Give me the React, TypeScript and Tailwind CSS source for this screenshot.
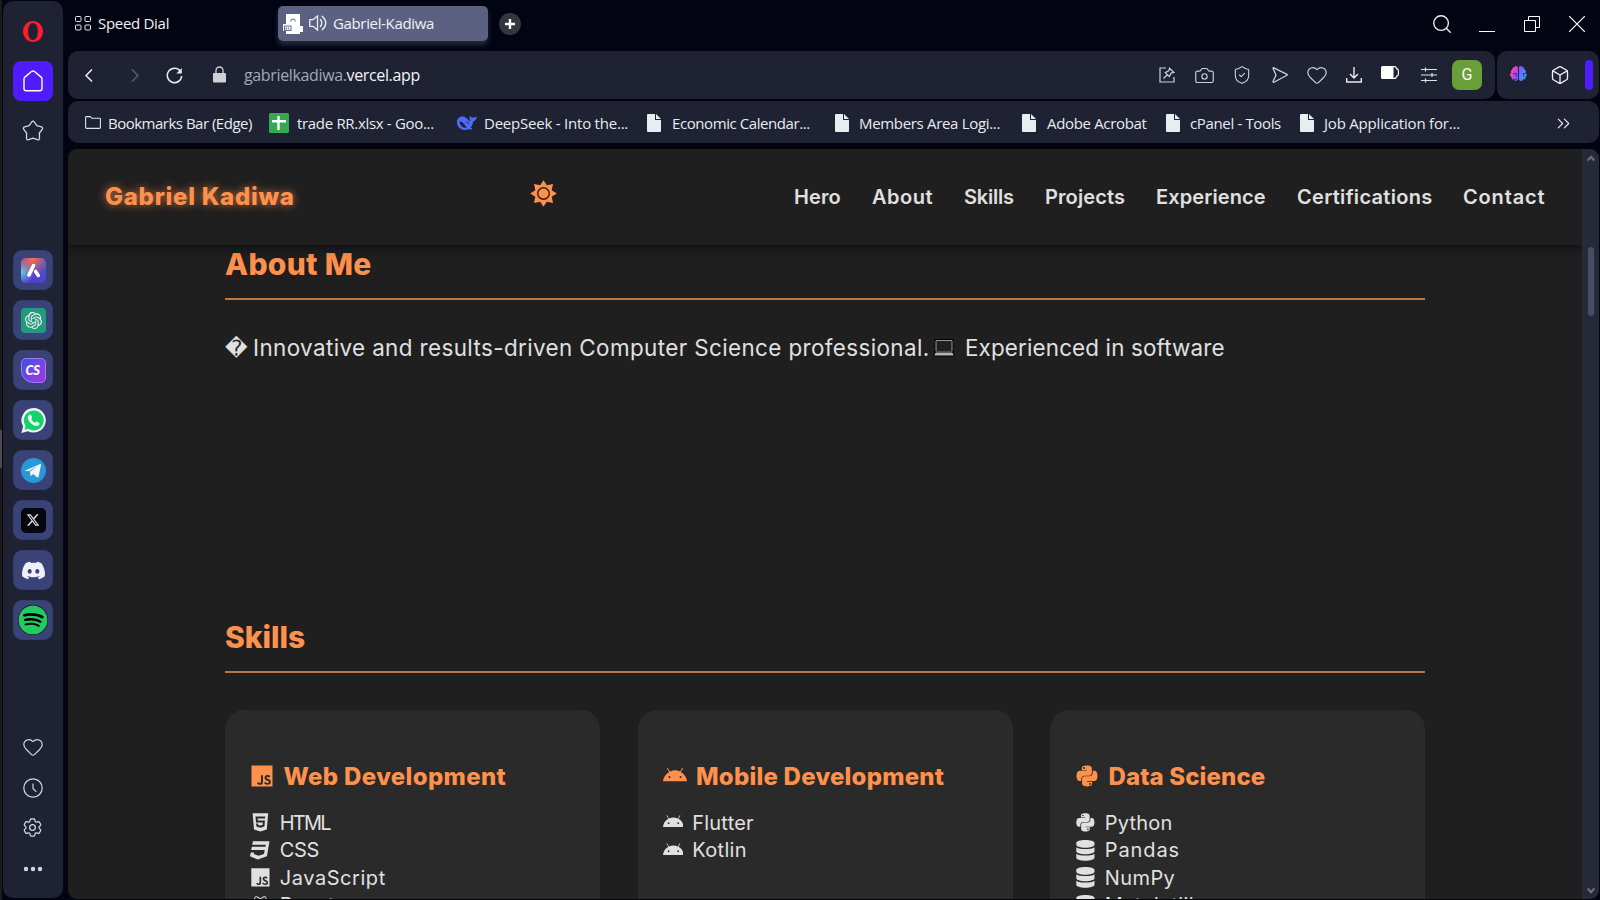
import React from 'react';
import { FaJs, FaHtml5, FaCss3, FaReact, FaAndroid, FaPython, FaDatabase, FaDiscord, FaSpotify, FaBrain } from 'react-icons/fa';
import { FaXTwitter } from 'react-icons/fa6';
import { HiOutlineCog6Tooth } from 'react-icons/hi2';
import { SiOpenai } from 'react-icons/si';
import { Box, Camera, ChevronsRight, Ellipsis, Heart, Search, ShieldCheck } from 'lucide-react';

const ui = "font-['Open_Sans',sans-serif]";
const geo = "font-['Inter',sans-serif]";

function DocIcon() {
  return (
    <svg className="h-[18px] w-[14px] shrink-0" viewBox="0 0 14 18" fill="#e8edf1">
      <path d="M1 0h7v6h6v11a1 1 0 0 1-1 1H1a1 1 0 0 1-1-1V1a1 1 0 0 1 1-1z" />
      <path d="M9 0l5 5H9z" />
    </svg>
  );
}

function SheetsIcon() {
  return (
    <svg className="size-5 shrink-0" viewBox="0 0 20 20">
      <rect width="20" height="20" rx="1.5" fill="#34a853" />
      <path d="M8.300 3h2.400v4h6.300v2.400h-6.300V17H8.300V9.400H3V7h5.300z" fill="#fff" />
    </svg>
  );
}

function WhaleIcon() {
  return (
    <svg className="h-[16px] w-5 shrink-0" viewBox="0 0 20 16">
      <path d="M0 7C0 3.500 2.800 1.500 6 1.500c1.200 0 2 .6 3.500 1.800 2 1.500 2.600 3 4 3.200C12.800 4.500 12 2.500 13 .6c.4 1.200 1.200 1.800 2.400 2 1.400.2 2.900-.4 4.400-.8-.3 2.400-1.500 4-3.500 4.500-.3 2.700-1.300 4.800-2.700 6.200.7.600 1.500.9 2 1.700-1.500.7-3 .4-4-.3C7.500 16.300 0 14.500 0 7z" fill="#4d6bfe" />
      <path d="M2.500 6.500c2-.5 3.800 1 5 3 .9 1.500 1.700 2.700 2.700 3.300-3.800.5-7.300-2-7.700-6.300zM8.500 6.500c1.500-.3 3.300 1 3.500 3-1-.3-1-1.700-3.500-3z" fill="#1e2233" />
    </svg>
  );
}

const bookmarks = [
  { icon: 'sheet', label: 'trade RR.xlsx - Goo...', slot: 'w-[188px]', gap: 'gap-2', track: 'tracking-[-0.32px]' },
  { icon: 'whale', label: 'DeepSeek - Into the...', slot: 'w-[190px]', gap: 'gap-[7px]', track: 'tracking-[-0.22px]' },
  { icon: 'doc', label: 'Economic Calendar...', slot: 'w-[188px]', gap: 'gap-[11px]', track: 'tracking-[-0.42px]' },
  { icon: 'doc', label: 'Members Area Logi...', slot: 'w-[187px]', gap: 'gap-[10px]', track: 'tracking-[-0.32px]' },
  { icon: 'doc', label: 'Adobe Acrobat', slot: 'w-[144px]', gap: 'gap-[11px]', track: 'tracking-[-0.33px]' },
  { icon: 'doc', label: 'cPanel - Tools', slot: 'w-[134px]', gap: 'gap-[10px]', track: 'tracking-[-0.35px]' },
  { icon: 'doc', label: 'Job Application for...', slot: 'w-[200px]', gap: 'gap-[10px]', track: 'tracking-[-0.2px]' },
];

function SideApp({ children }: { children: React.ReactNode }) {
  return <div className="flex size-10 items-center justify-center rounded-[9px] border border-[#343d6b] bg-[#3a4378]">{children}</div>;
}

function Sidebar() {
  return (
    <aside className="mt-px flex h-[897px] w-[60px] shrink-0 flex-col items-center rounded-[10px] bg-[#1e2233] text-[#d5d8e0]">
      <svg className="mt-5 h-[21px] w-5" viewBox="0 0 20 21">
        <path fillRule="evenodd" fill="#fa1e2e" d="M10 0C15.500 0 20 4.700 20 10.500S15.500 21 10 21 0 16.300 0 10.500 4.500 0 10 0zM10 2C7.100 2 5.100 5.500 5.100 10.500s2 8.500 4.900 8.500 4.900-3.500 4.900-8.500S12.900 2 10 2z" />
      </svg>
      <div className="mt-[19px] flex size-10 items-center justify-center rounded-[8px] bg-[#4f1cff]">
        <svg className="h-[22px] w-5" viewBox="0 0 20 22" fill="none" stroke="#fff" strokeWidth="1.400" strokeLinejoin="round">
          <path d="M1 9.200Q1 8 1.900 7.100L8.500 1.500q1.500-1.100 3 0l6.600 5.600q.9.900.9 2.100V18.500q0 2.200-2.200 2.200H3.200Q1 20.700 1 18.500z" />
        </svg>
      </div>
      <svg className="mt-[19px] mr-px h-[22px] w-[22px]" viewBox="0 0 22 22" fill="none" stroke="currentColor" strokeWidth="1.300" strokeLinejoin="round">
        <path d="M9.700 2q1.300-1.600 2.600 0l2.500 3.700 4.600 1.200q1.900.7.800 2.400l-2.800 3.700.1 5.300q-.2 1.900-2.100 1.400L11 18.100l-4.400 1.600q-1.900.5-2.100-1.400l.1-5.300L1.800 9.300Q.7 7.600 2.600 6.900l4.600-1.200z" />
      </svg>
      <div className="mt-[108px] flex flex-col gap-[10px]">
        <SideApp>
          <svg className="size-[25px]" viewBox="0 0 25 25">
            <defs>
              <linearGradient id="aria" x1="0" y1="1" x2="1" y2="0.300">
                <stop offset="0" stopColor="#5a2bd0" />
                <stop offset="1" stopColor="#4a55c8" />
              </linearGradient>
              <radialGradient id="ariaWarm" cx="0.450" cy="0" r="0.700">
                <stop offset="0" stopColor="#ff7040" />
                <stop offset="1" stopColor="#ff7040" stopOpacity="0" />
              </radialGradient>
              <radialGradient id="ariaCool" cx="0" cy="0.550" r="0.550">
                <stop offset="0" stopColor="#58d5ea" />
                <stop offset="1" stopColor="#58d5ea" stopOpacity="0" />
              </radialGradient>
            </defs>
            <rect width="25" height="25" rx="5" fill="url(#aria)" />
            <rect width="25" height="25" rx="5" fill="url(#ariaCool)" />
            <rect width="25" height="25" rx="5" fill="url(#ariaWarm)" />
            <path d="M12.500 7.500L8 17M14.600 13.500L17.300 17.400" stroke="#fff" strokeWidth="3.600" strokeLinecap="round" />
          </svg>
        </SideApp>
        <SideApp>
          <div className="flex size-[25px] items-center justify-center rounded-[4px] bg-[#24997d]"><SiOpenai className="size-[17px] text-[#f0f4f4]" /></div>
        </SideApp>
        <SideApp>
          <div className="flex size-[25px] items-center justify-center rounded-[5px] rounded-bl-[12px] border border-[#a678f5] bg-linear-to-br from-[#3550e0] to-[#a030e8] font-['Lato',sans-serif] text-[13px] font-black tracking-[-0.3px] text-white italic"><span className="mt-px mr-px">CS</span></div>
        </SideApp>
        <SideApp>
          <svg className="size-[25px]" viewBox="0 0 25 25">
            <path d="M12.700 0A12.300 12.300 0 1 1 6.800 23.200L.3 25l1.800-6.500A12.300 12.300 0 0 1 12.700 0z" fill="#f0f3f6" />
            <path d="M12.700 2.400A10 10 0 1 1 7.300 20.800L3.600 21.700l1-3.700A10 10 0 0 1 12.700 2.400z" fill="#10d369" />
            <path d="M8.500 6.800c.6-.4 1.200-.3 1.500.3l1 2.200c.2.500-.2 1-.8 1.600 1 2 2.200 3 4.100 3.900.8-.9 1.100-1.400 1.700-1.100l2.300 1.200c.6.300.2 1.700-.4 2.300-3.900 3.200-12-4-11-8.100.2-1 .8-1.700 1.600-2.300z" fill="#f4f7f8" />
          </svg>
        </SideApp>
        <SideApp>
          <svg className="size-[25px]" viewBox="0 0 25 25">
            <circle cx="12.500" cy="12.500" r="12.500" fill="#2699d6" />
            <path d="M3.500 12.800L19.200 6q1-.3.800.9l-2.400 11.900q-.4 1.100-1.400.4l-4.200-3.100-2.300 2.200-.8-4.500 7.800-6.300-9 5.800z" fill="#f2f5f8" />
          </svg>
        </SideApp>
        <SideApp>
          <div className="flex size-[25px] items-center justify-center rounded-[5px] bg-[#06080d]"><FaXTwitter className="size-[14px] text-[#dfe1e6]" /></div>
        </SideApp>
        <SideApp><FaDiscord className="size-[25px] text-[#eff0f6]" /></SideApp>
        <SideApp>
          <div className="flex size-[30px] items-center justify-center overflow-hidden rounded-full bg-black"><FaSpotify className="size-[30px] shrink-0 text-[#22cb61]" /></div>
        </SideApp>
      </div>
      <Heart className="mt-[96px] mr-px size-[22px]" strokeWidth={1.300} />
      <svg className="mt-[20px] mr-px size-5" viewBox="0 0 20 20" fill="none" stroke="currentColor" strokeWidth="1.200"><circle cx="10" cy="10" r="9.200" /><path d="M10 5.500v5l3.300 3.300" /></svg>
      <HiOutlineCog6Tooth className="mt-[18px] mr-px size-[23px]" strokeWidth={1.300} />
      <Ellipsis className="mt-[18px] size-6" strokeWidth={2.400} />
    </aside>
  );
}

function TabStrip() {
  return (
    <div className={`flex h-[46px] items-center text-[15px] text-[#f1f2f5] ${ui}`}>
      <svg className="ml-[7px] size-4" viewBox="0 0 16 16" fill="none" stroke="#e4e6ea">
        <rect x=".5" y="1.500" width="5.500" height="5" rx="1" /><rect x="10" y="1.500" width="5.500" height="5" rx="1" />
        <rect x=".5" y="10" width="5.500" height="5" rx="1" /><rect x="10" y="10" width="5.500" height="5" rx="1" />
      </svg>
      <span className="mt-px ml-[7px] w-[180px] tracking-[-0.3px]">Speed Dial</span>
      <div className="flex h-[35px] w-[210px] items-center rounded-[5px] bg-[#5c6182] pl-[5px] shadow-[0_4px_5px_#252a3e]">
        <svg className="mt-px size-5" viewBox="0 0 20 20">
          <path d="M3 0h14v12h3v6h-3v2H3v-3H0v-7h3z" fill="#fff" />
          <path d="M8 7.500V6.200Q8 5 10 5t2 1.200v1.300M1.500 16.500v-4.500h6.500v4.500zM3.300 15.500v-2M5.300 15.500v-2" fill="none" stroke="#6b7090" strokeWidth="1.100" />
        </svg>
        <svg className="ml-[6px] h-4 w-[18px]" viewBox="0 0 18 16" fill="none" stroke="#eef0f6" strokeWidth="1.300" strokeLinecap="round">
          <path d="M8.500 1v14L4 11.300H.8V4.700H4zM11.500 4.500q2.600 3.500 0 7M13.200 1.200Q20.500 8 13.200 14.800" />
        </svg>
        <span className="mt-px ml-[6px] tracking-[-0.35px]">Gabriel-Kadiwa</span>
      </div>
      <div className="mt-px ml-[11px] flex size-[22px] items-center justify-center rounded-full bg-[#33353f]">
        <svg className="size-[10px]" viewBox="0 0 10 10" stroke="#fff" strokeWidth="2.400"><path d="M5 0v10M0 5h10" /></svg>
      </div>
      <div className="mt-px mr-[14px] ml-auto flex items-center">
        <Search className="size-[22px]" strokeWidth={1.500} />
        <svg className="ml-[26px] h-4 w-4" viewBox="0 0 16 16" stroke="#fff"><path d="M0 15.500h16" /></svg>
        <svg className="ml-[29px] size-4" viewBox="0 0 16 16" fill="none" stroke="#fff"><path d="M.5 4.500h11v11H.5zM4.500 4.500v-4h11v11h-4" /></svg>
        <svg className="ml-[29px] size-4" viewBox="0 0 16 16" stroke="#fff" strokeWidth="1.200"><path d="M0 0l16 16M16 0L0 16" /></svg>
      </div>
    </div>
  );
}

function AddressBar() {
  return (
    <div className="mt-[5px] flex h-[48px] gap-[2px] text-[#cdd1db]">
      <div className="flex w-[1427px] items-center rounded-[10px] bg-[#1e2233] pr-[13px]">
        <svg className="ml-[17px] h-[13px] w-2" viewBox="0 0 8 13" fill="none" stroke="#f0f1f4" strokeWidth="1.500"><path d="M7 .5L1 6.500l6 6" /></svg>
        <svg className="ml-[38px] h-[13px] w-2" viewBox="0 0 8 13" fill="none" stroke="#5b5f70" strokeWidth="1.500"><path d="M1 .5l6 6-6 6" /></svg>
        <svg className="ml-[27px] size-[17px]" viewBox="0 0 17 17">
          <path d="M14.200 4A7.200 7.200 0 1 0 15.700 9" fill="none" stroke="#eceef2" strokeWidth="1.500" /><path d="M15.800 1v5.400h-5.400z" fill="#eceef2" />
        </svg>
        <svg className="mb-[2px] ml-[30px] h-[17px] w-[13px]" viewBox="0 0 13 17">
          <path d="M3 8V4.500a3.500 3.500 0 0 1 7 0V8" fill="none" stroke="#cfd2d4" strokeWidth="1.300" /><rect y="7" width="13" height="9.500" rx="1" fill="#cfd2d4" />
        </svg>
        <span className={`ml-[18px] text-[16px] tracking-[-0.36px] text-[#a3a8b8] ${ui}`}>gabrielkadiwa.<span className="text-[#f3f4f7]">vercel.app</span></span>
        <div className="ml-auto flex items-center">
          <svg className="size-4" viewBox="0 0 16 16" fill="none" stroke="currentColor" strokeWidth="1.200">
            <path d="M7 1H1v14h14v-5M4.500 11.500l4-4M10.500 1.200l4.300 4.300-2.500.4-2 3.700-4-4 3.700-2z" />
          </svg>
          <Camera className="ml-[19px] size-[21px]" strokeWidth={1.300} />
          <ShieldCheck className="ml-[17px] size-[20px]" strokeWidth={1.300} />
          <svg className="ml-5 size-4" viewBox="0 0 16 16" fill="none" stroke="currentColor" strokeWidth="1.300" strokeLinejoin="round"><path d="M1 1.300q0-.8.900-.5L15 7.300q.6.400 0 .9L1.900 15.200q-.9.200-.9-.6L4 8z" /></svg>
          <Heart className="ml-[18px] size-[22px]" strokeWidth={1.300} />
          <svg className="ml-[18px] size-4" viewBox="0 0 16 16" fill="none" stroke="#e8eaee" strokeWidth="1.400"><path d="M8 0v11M4 7l4 4 4-4M.7 11v4h14.600v-4" /></svg>
          <svg className="mb-[5px] ml-[19px] h-[13px] w-[18px]" viewBox="0 0 18 13">
            <path d="M11 .6h3q.8 0 1.200 1.200l.3.900q1.900.2 1.900 2v3.600q0 1.800-1.900 2l-.3.900q-.4 1.200-1.200 1.200h-3" fill="none" stroke="#fff" strokeWidth="1.200" /><rect width="12.500" height="13" rx="1.500" fill="#fff" />
          </svg>
          <svg className="ml-[22px] size-4" viewBox="0 0 16 16" fill="none" stroke="#e0e3e8" strokeWidth="1.200">
            <path d="M0 2.500h16M0 8h16M0 13.500h16M4.500 .5v4M11 6v4M4.500 11.500v4" />
          </svg>
          <div className="ml-[15px] flex size-[30px] items-center justify-center rounded-[7px] bg-[#689f38] font-['Roboto',sans-serif] text-[16px] text-white">G</div>
        </div>
      </div>
      <div className="flex w-[102px] items-center rounded-[10px] bg-[#1e2233]">
        <svg className="ml-[13px] size-[20px]" viewBox="0 0 19 19">
          <defs><linearGradient id="brain" gradientUnits="userSpaceOnUse" x1="0" y1="0" x2="576" y2="230"><stop offset="0" stopColor="#ff7a3c" /><stop offset=".3" stopColor="#e23bd2" /><stop offset=".6" stopColor="#7b5cff" /><stop offset="1" stopColor="#38a0ff" /></linearGradient></defs>
          <FaBrain x="0" y="0" width="19" height="19" fill="url(#brain)" />
          <path d="M3 8h3v3M16 8h-3v3M3.500 13.500h3M15.500 13.500h-3" stroke="#3a2f80" strokeWidth="1" fill="none" />
        </svg>
        <Box className="ml-[20px] size-[20px] text-[#eceef2]" strokeWidth={1.600} />
        <div className="ml-[15px] h-[30px] w-2 rounded-[4px] bg-[#4f1cff]" />
      </div>
    </div>
  );
}

function BookmarksBar() {
  return (
    <div className={`mt-[2px] flex h-[42px] items-center rounded-[10px] bg-[#1e2233] pl-[17px] text-[15px] text-[#e9ebef] ${ui}`}>
      <svg className="mt-px h-[13px] w-4" viewBox="0 0 16 13" fill="none" stroke="#dfe2e8" strokeWidth="1.100"><path d="M.6 1.500Q.6.600 1.500.6h3.700l1.700 1.700h7.600q.9 0 .9.900v8.300q0 .9-.9.900h-13q-.9 0-.9-.9z" /></svg>
      <span className="mt-[2px] ml-[7px] w-[161px] shrink-0 tracking-[-0.5px] whitespace-nowrap">Bookmarks Bar (Edge)</span>
      {bookmarks.map((b) => (
        <div key={b.label} className={`mt-[2px] flex shrink-0 items-center whitespace-nowrap ${b.slot} ${b.gap}`}>
          {b.icon === 'sheet' ? <SheetsIcon /> : b.icon === 'whale' ? <WhaleIcon /> : <DocIcon />}
          <span className={b.track}>{b.label}</span>
        </div>
      ))}
      <ChevronsRight className="mt-[2px] mr-[25px] ml-auto size-[21px]" strokeWidth={1.300} />
    </div>
  );
}

const links = [
  { t: 'Hero', c: 'w-[78px] tracking-[0.1px]' },
  { t: 'About', c: 'w-[92px] tracking-[0.5px]' },
  { t: 'Skills', c: 'w-[81px] tracking-[-0.2px]' },
  { t: 'Projects', c: 'w-[111px] tracking-[0.1px]' },
  { t: 'Experience', c: 'w-[141px] tracking-[0.1px]' },
  { t: 'Certifications', c: 'w-[166px] tracking-[0.3px]' },
  { t: 'Contact', c: 'w-[81px] tracking-[0.85px]' },
];

function SiteNav() {
  return (
    <header className="relative z-10 flex h-[96px] shrink-0 items-center bg-[#1f1f1f] pl-[37px] shadow-[0_2px_12px_rgba(0,0,0,0.6)]">
      <span className="w-[425px] text-[24px] font-extrabold tracking-[0.72px] text-[#ff914d] [text-shadow:0_0_8px_rgba(255,145,77,0.75)]">Gabriel Kadiwa</span>
      <svg className="mb-[8px] size-[27px]" viewBox="-13.5 -13.5 27 27" fill="#ff914d">
        <path fillRule="evenodd" d="M0-13.300L3.300-8.200 9.500-9.500 8.200-3.300 13.300 0 8.200 3.300 9.500 9.500 3.300 8.200 0 13.300-3.300 8.200-9.500 9.500-8.200 3.300-13.300 0-8.200-3.300-9.500-9.500-3.300-8.200zM0-6.500a6.500 6.500 0 1 0 0 13 6.500 6.500 0 0 0 0-13z" />
        <circle r="5.100" />
      </svg>
      <nav className="ml-auto flex w-[788px] text-[20px] font-semibold text-[#e0e0e0]">
        {links.map((l) => <a key={l.t} className={`shrink-0 ${l.c}`}>{l.t}</a>)}
      </nav>
    </header>
  );
}

function SectionTitle({ children, className }: { children: React.ReactNode; className: string }) {
  return <h2 className={`h-[55px] border-b-2 border-[#c07640] text-[30px] leading-[38px] font-extrabold text-[#ff914d] ${className}`}>{children}</h2>;
}

const skills = [
  { title: 'Web Development', Icon: FaJs, track: 'tracking-[0.35px]', items: [{ n: 'HTML', I: FaHtml5, t: 'tracking-[-1.8px]' }, { n: 'CSS', I: FaCss3, t: 'tracking-[-0.4px]' }, { n: 'JavaScript', I: FaJs, t: 'tracking-[0.55px]' }, { n: 'React', I: FaReact, t: 'tracking-[0.3px]' }] },
  { title: 'Mobile Development', Icon: FaAndroid, track: 'tracking-[0.22px]', items: [{ n: 'Flutter', I: FaAndroid, t: 'tracking-[0.2px]' }, { n: 'Kotlin', I: FaAndroid, t: 'tracking-[0.3px]' }] },
  { title: 'Data Science', Icon: FaPython, track: 'tracking-[0.12px]', items: [{ n: 'Python', I: FaPython, t: 'tracking-[0.2px]' }, { n: 'Pandas', I: FaDatabase, t: 'tracking-[0.9px]' }, { n: 'NumPy', I: FaDatabase, t: 'tracking-[0.4px]' }, { n: 'Matplotlib', I: FaDatabase, t: 'tracking-[0.3px]' }] },
];

function SkillCard({ s }: { s: (typeof skills)[number] }) {
  return (
    <div className="h-[400px] w-[375px] rounded-[19px] bg-[#2a2a2a] pt-[50px] pl-[25px]">
      <h3 className="flex h-[34px] items-center gap-[9.500px] text-[24px] font-extrabold text-[#ff914d]">
        <s.Icon className="mb-[3px] size-6" />
        <span className={s.track}>{s.title}</span>
      </h3>
      <ul className="mt-[15px] text-[20px] text-[#e0e0e0]">
        {s.items.map(({ n, I, t }) => (
          <li key={n} className={`flex h-[27.500px] items-center gap-[9px] ${t}`}><I className="size-[20.800px]" />{n}</li>
        ))}
      </ul>
    </div>
  );
}

function Site() {
  return (
    <div className={`mt-[6px] flex h-[750px] overflow-hidden rounded-[9px] bg-[#1f1f1f] ${geo}`}>
      <div className="flex w-[1514px] shrink-0 flex-col overflow-hidden">
        <SiteNav />
        <main className="w-[1357px] shrink-0 pl-[157px]">
          <SectionTitle className="tracking-[0.3px]">About Me</SectionTitle>
          <p className="mt-[28px] flex h-10 items-center text-[22.400px] whitespace-nowrap text-[#e0e0e0]">
            <span className="w-[28px] pt-px font-['DejaVu_Sans',sans-serif] text-[22px]">&#xFFFD;</span>
            <span className="w-[680px] tracking-[0.4px]">Innovative and results-driven Computer Science professional.</span>
            <svg className="w-[22px]" viewBox="0 0 22 18" fill="none">
              <path d="M3 .8h16v12H3z" stroke="#000" strokeWidth="3" /><path d="M3 1.500h16v11H3z" stroke="#999" fill="#1f1f1f" />
              <path d="M2.500 13h17l2 4H.5z" fill="#b5b5b5" stroke="#000" />
            </svg>
            <span className="ml-[10px] tracking-[0.15px]">Experienced in software</span>
          </p>
          <div className="h-[250px]" />
          <SectionTitle className="tracking-[0px]">Skills</SectionTitle>
          <div className="mt-[37px] flex gap-[37.500px]">
            {skills.map((s) => <SkillCard key={s.title} s={s} />)}
          </div>
        </main>
      </div>
      <div className="flex w-[17px] flex-col items-center bg-[#252938]">
        <svg className="mt-[6px] h-[7px] w-2" viewBox="0 0 8 7" fill="none" stroke="#707178" strokeWidth="2"><path d="M.7 5.500L4 1.800l3.300 3.700" /></svg>
        <div className="mt-[85px] h-[69px] w-[6px] rounded-[3px] bg-[#4b4d66]" />
        <svg className="mt-auto mb-[5px] h-[7px] w-2" viewBox="0 0 8 7" fill="none" stroke="#707178" strokeWidth="2"><path d="M.7 1.500L4 5.200l3.300-3.700" /></svg>
      </div>
    </div>
  );
}

export default function App() {
  return (
    <div className="flex h-[900px] w-[1600px] overflow-hidden bg-[#020412]">
      <div className="w-[2px] shrink-0 bg-[#1b1b1c] pt-[430px]"><div className="h-[38px] w-[2px] bg-[#4c4c4f]" /></div>
      <div className="w-px shrink-0" />
      <Sidebar />
      <div className="ml-[5px] w-[1531px] shrink-0">
        <TabStrip />
        <AddressBar />
        <BookmarksBar />
        <Site />
      </div>
    </div>
  );
}
